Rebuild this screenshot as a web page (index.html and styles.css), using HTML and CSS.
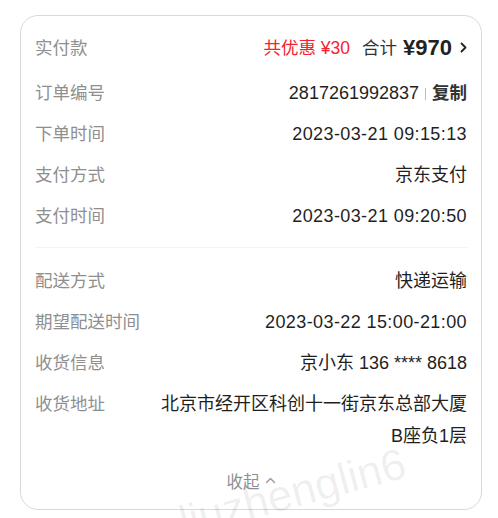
FILE: index.html
```html
<!DOCTYPE html>
<html lang="zh-CN">
<head>
<meta charset="utf-8">
<title>订单信息</title>
<link rel="stylesheet" href="styles.css">
</head>
<body>
<div class="card">
  <div class="row row-total">
    <span class="label">实付款</span>
    <span class="value total">
      <span class="discount">共优惠 ¥30</span>
      <span class="sum-label">合计</span>
      <span class="sum">¥970</span>
      <svg class="chev" width="7" height="11" viewBox="0 0 7 11"><path d="M1.5 1.5 L5.5 5.5 L1.5 9.5" fill="none" stroke="#222" stroke-width="1.8" stroke-linecap="round" stroke-linejoin="round"/></svg>
    </span>
  </div>
  <div class="row">
    <span class="label">订单编号</span>
    <span class="value">2817261992837<span class="sep"></span><span class="copy">复制</span></span>
  </div>
  <div class="row">
    <span class="label">下单时间</span>
    <span class="value date">2023-03-21 09:15:13</span>
  </div>
  <div class="row">
    <span class="label">支付方式</span>
    <span class="value">京东支付</span>
  </div>
  <div class="row">
    <span class="label">支付时间</span>
    <span class="value date">2023-03-21 09:20:50</span>
  </div>
  <div class="divider"></div>
  <div class="row">
    <span class="label">配送方式</span>
    <span class="value">快递运输</span>
  </div>
  <div class="row">
    <span class="label">期望配送时间</span>
    <span class="value date">2023-03-22 15:00-21:00</span>
  </div>
  <div class="row">
    <span class="label">收货信息</span>
    <span class="value">京小东 136 **** 8618</span>
  </div>
  <div class="row">
    <span class="label">收货地址</span>
    <span class="value addr">北京市经开区科创十一街京东总部大厦B座负1层</span>
  </div>
  <div class="collapse">
    收起
    <svg width="11" height="7" viewBox="0 0 11 7"><path d="M1.5 5.5 L5.5 1.5 L9.5 5.5" fill="none" stroke="#999" stroke-width="1.4" stroke-linecap="round" stroke-linejoin="round"/></svg>
  </div>
</div>
<div class="watermark">liuzhenglin6</div>
</body>
</html>
```
FILE: styles.css
```css
* { box-sizing: border-box; }
html, body {
  margin: 0;
  padding: 0;
  background: #fff;
}
body {
  position: relative;
  width: 498px;
  height: 518px;
  font-family: "Liberation Sans", "Noto Sans CJK SC", sans-serif;
  color: #1f1f1f;
  overflow: hidden;
}
.card {
  margin: 15px 0 0 20px;
  width: 462px;
  height: 495px;
  border: 1px solid #d9d9d9;
  border-radius: 18px;
  padding: 11px 14px 0 14px;
  background: #fff;
}
.row {
  display: flex;
  justify-content: space-between;
  align-items: flex-start;
  padding: 4.5px 0;
  line-height: 32px;
  font-size: 17.5px;
}
.row-total {
  margin-bottom: 4px;
  align-items: center;
}
.label {
  color: #8f8f8f;
  flex: none;
  white-space: nowrap;
}
.value {
  color: #1f1f1f;
  text-align: right;
  font-size: 18px;
}
.date {
  letter-spacing: 0.4px;
}
.addr {
  width: 312px;
  word-break: break-all;
}
.total {
  display: flex;
  align-items: center;
  font-size: 17.5px;
}
.discount {
  color: #f5222d;
  margin-right: 12px;
}
.sum-label {
  color: #333;
  margin-right: 6px;
}
.sum {
  font-size: 22px;
  font-weight: 700;
  color: #222;
  margin-right: 8px;
}
.chev { display: block; }
.sep {
  display: inline-block;
  width: 1px;
  height: 12px;
  background: #bbb;
  margin: 0 6px;
  vertical-align: -1px;
}
.copy {
  font-weight: 700;
  color: #333;
  font-size: 17.5px;
}
.divider {
  height: 1px;
  background: #f3f3f3;
  margin: 11px 0 12px;
}
.collapse {
  display: flex;
  justify-content: center;
  align-items: center;
  gap: 5px;
  margin-top: 4px;
  height: 41px;
  font-size: 16.5px;
  color: #8f8f8f;
}
.watermark {
  position: absolute;
  left: 184px;
  top: 500px;
  font-size: 44px;
  line-height: 1;
  color: rgba(0, 0, 0, 0.07);
  transform: rotate(-15deg);
  transform-origin: 0 36.5px;
  white-space: nowrap;
  pointer-events: none;
}
```
